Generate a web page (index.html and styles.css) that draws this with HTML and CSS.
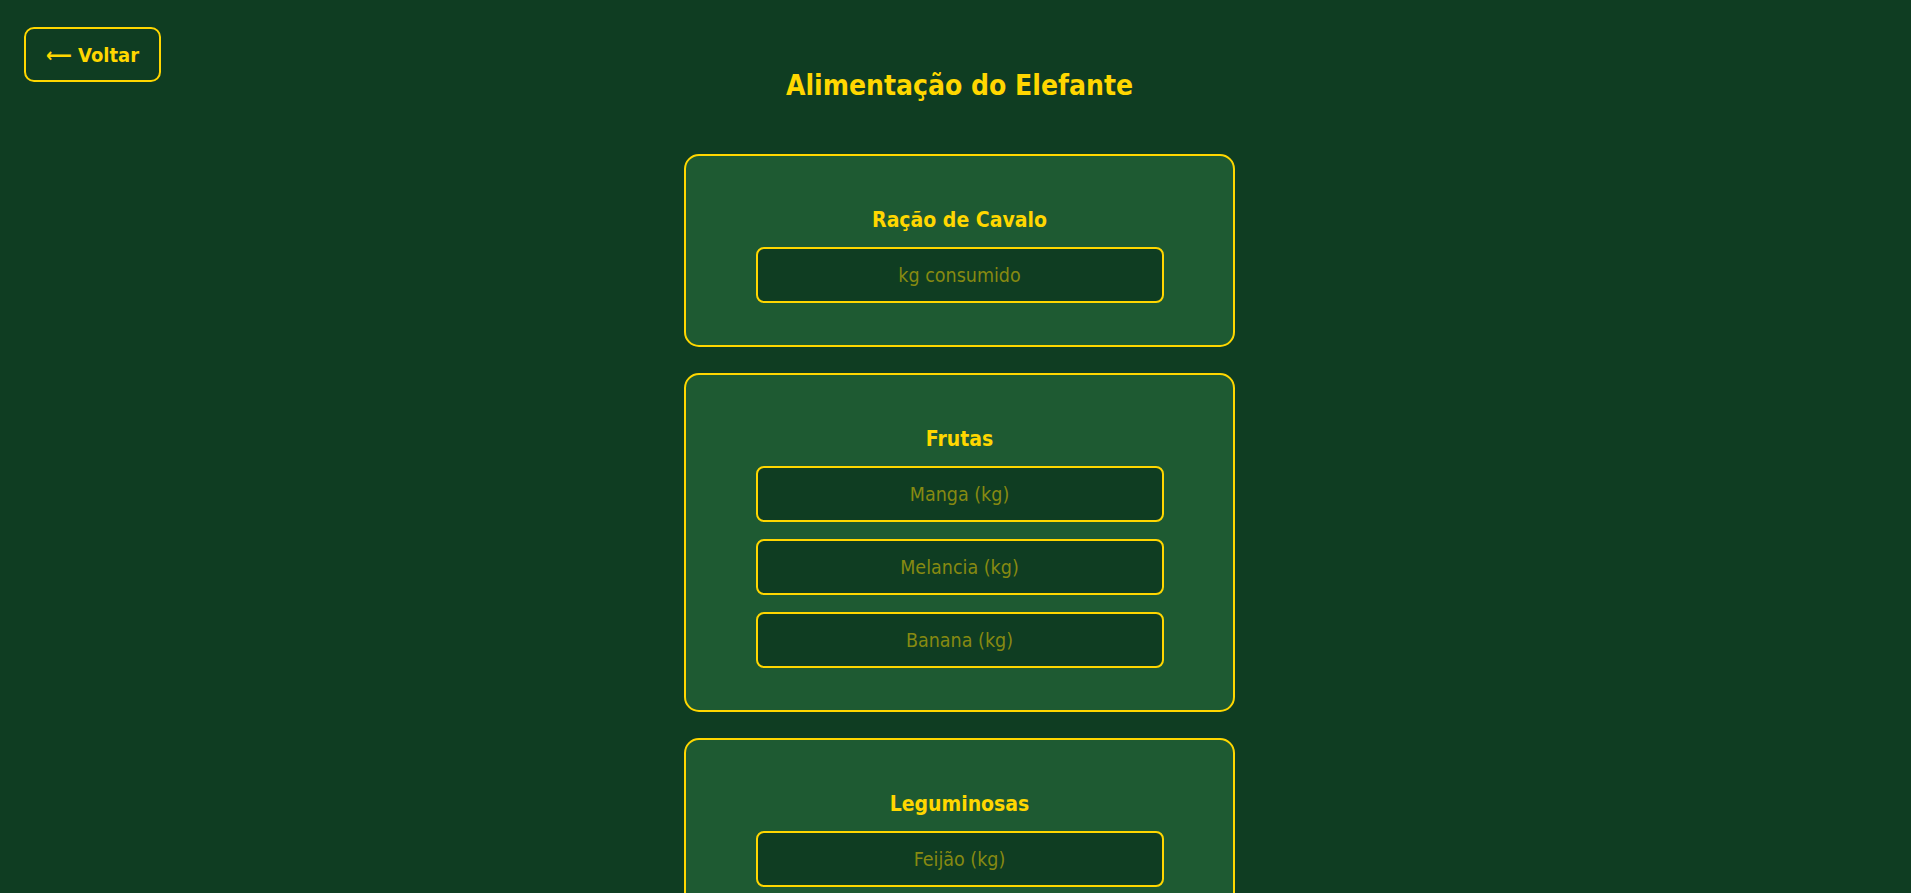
FILE: index.html
```html
<!DOCTYPE html>
<html lang="pt-BR">
<head>
<meta charset="utf-8">
<title>Alimentação do Elefante</title>
<link rel="stylesheet" href="styles.css">
</head>
<body>
<div class="page">
  <header class="topbar">
    <button class="back-btn" type="button">⟵ Voltar</button>
    <h1 class="page-title">Alimentação do Elefante</h1>
    <div class="spacer"></div>
  </header>
  <main class="cards">
    <section class="card">
      <h3 class="card-title">Ração de Cavalo</h3>
      <input class="field" type="text" placeholder="kg consumido">
    </section>
    <section class="card">
      <h3 class="card-title">Frutas</h3>
      <input class="field" type="text" placeholder="Manga (kg)">
      <input class="field" type="text" placeholder="Melancia (kg)">
      <input class="field" type="text" placeholder="Banana (kg)">
    </section>
    <section class="card">
      <h3 class="card-title">Leguminosas</h3>
      <input class="field" type="text" placeholder="Feijão (kg)">
      <input class="field" type="text" placeholder="Ervilha (kg)">
    </section>
  </main>
</div>
</body>
</html>
```

FILE: styles.css
```css
* {
  box-sizing: border-box;
}

html, body {
  margin: 0;
  padding: 0;
  background: #0f3d22;
  font-family: "DejaVu Sans Condensed", "DejaVu Sans", sans-serif;
  color: #ffd700;
  overflow: hidden;
}

.page {
  padding: 27px 0 40px 8px;
}

.topbar {
  display: grid;
  grid-template-columns: 1fr auto 1fr;
  align-items: start;
}

.back-btn {
  justify-self: start;
  margin-left: 16px;
  height: 55px;
  padding: 0 20px;
  background: transparent;
  border: 2px solid #ffd700;
  border-radius: 10px;
  color: #ffd700;
  font-family: inherit;
  font-weight: bold;
  font-size: 20px;
  cursor: pointer;
}

.page-title {
  margin: 42px 0 0;
  font-size: 28px;
  font-weight: bold;
  line-height: 33px;
  text-align: center;
}

.cards {
  display: flex;
  flex-direction: column;
  align-items: center;
  gap: 26px;
  margin-top: 52px;
}

.card {
  width: 551px;
  display: flex;
  flex-direction: column;
  align-items: center;
  gap: 17px;
  padding: 53px 0 42px;
  background: #1e5a32;
  border: 2px solid #ffd700;
  border-radius: 15px;
}

.card-title {
  margin: 0 0 -2px;
  font-size: 21px;
  line-height: 23px;
  font-weight: bold;
}

.field {
  width: 408px;
  height: 56px;
  background: #0f3d22;
  border: 2px solid #ffd700;
  border-radius: 8px;
  color: #ffd700;
  font-family: inherit;
  font-size: 19.5px;
  text-align: center;
  outline: none;
}

.field::placeholder {
  color: #878a11;
  opacity: 1;
}
```
